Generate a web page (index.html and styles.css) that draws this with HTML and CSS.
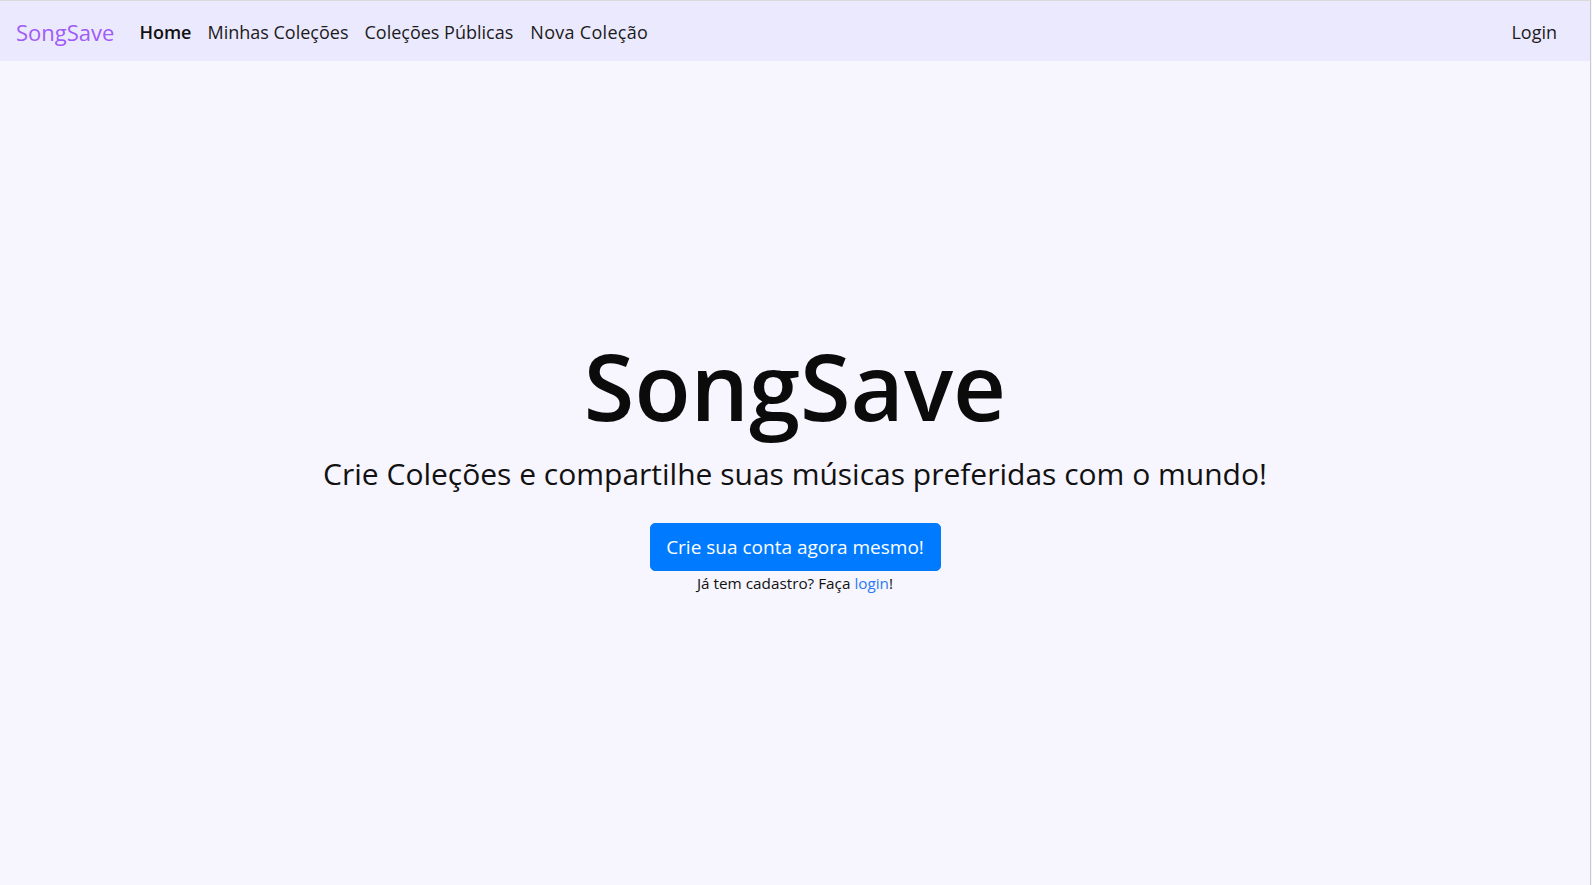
FILE: index.html
```html
<!DOCTYPE html>
<html lang="pt-BR">
<head>
<meta charset="utf-8">
<title>SongSave</title>
<link rel="stylesheet" href="styles.css">
</head>
<body>
<div class="frame">
  <nav class="navbar">
    <a class="brand" href="#">SongSave</a>
    <ul class="nav">
      <li><a class="nav-link active" href="#">Home</a></li>
      <li><a class="nav-link" href="#">Minhas Coleções</a></li>
      <li><a class="nav-link" href="#">Coleções Públicas</a></li>
      <li><a class="nav-link" href="#">Nova Coleção</a></li>
    </ul>
    <a class="nav-link login" href="#">Login</a>
  </nav>
  <main class="hero">
    <h1 class="title">SongSave</h1>
    <p class="lead">Crie Coleções e compartilhe suas músicas preferidas com o mundo!</p>
    <a class="btn" href="#">Crie sua conta agora mesmo!</a>
    <p class="small">Já tem cadastro? Faça <a href="#">login</a>!</p>
  </main>
</div>
</body>
</html>
```
FILE: styles.css
```css
* { box-sizing: border-box; }
html, body { margin: 0; height: 100%; }
body {
  font-family: "Open Sans", "Noto Sans", sans-serif;
  color: #111;
  background: #f7f5fe;
}
.frame {
  height: 885px;
  display: flex;
  flex-direction: column;
  border-top: 1px solid #d9d9d9;
  border-right: 1px solid #c8c8c8;
  margin-right: 1px;
}
a { text-decoration: none; }
.navbar {
  display: flex;
  align-items: center;
  height: 60px;
  padding: 1px 16px 0;
  background: #ebe9fe;
}
.brand {
  font-size: 22px;
  color: #a05cf6;
  margin-right: 17px;
}
.nav {
  list-style: none;
  margin: 0;
  padding: 0;
  display: flex;
  flex: 1;
}
.nav-link {
  display: block;
  padding: 8px 8px;
  font-size: 18px;
  color: #1b1b1b;
}
.nav li:last-child .nav-link { letter-spacing: 0.3px; padding-left: 9px; }
.nav-link.active { font-weight: 600; color: #111; }
.login { margin-right: 9px; }
.hero {
  flex: 1;
  display: flex;
  flex-direction: column;
  align-items: center;
  justify-content: center;
  text-align: center;
  padding-bottom: 22px;
}
.title {
  margin: 0 0 14px;
  font-size: 92px;
  font-weight: 600;
  line-height: 1.2;
  color: #0b0b0b;
}
.lead {
  margin: 0 0 30px;
  font-size: 30px;
  font-weight: 400;
  line-height: 1.25;
  color: #111;
}
.btn {
  display: inline-block;
  padding: 8px 0;
  font-size: 19px;
  line-height: 30px;
  color: #fff;
  background: #007bff;
  border: 1px solid #007bff;
  border-radius: 5px;
  width: 291px;
  white-space: nowrap;
}
.small {
  margin: 2px 0 0;
  font-size: 15.3px;
  color: #111;
}
.small a { color: #2b7bf5; }
```
